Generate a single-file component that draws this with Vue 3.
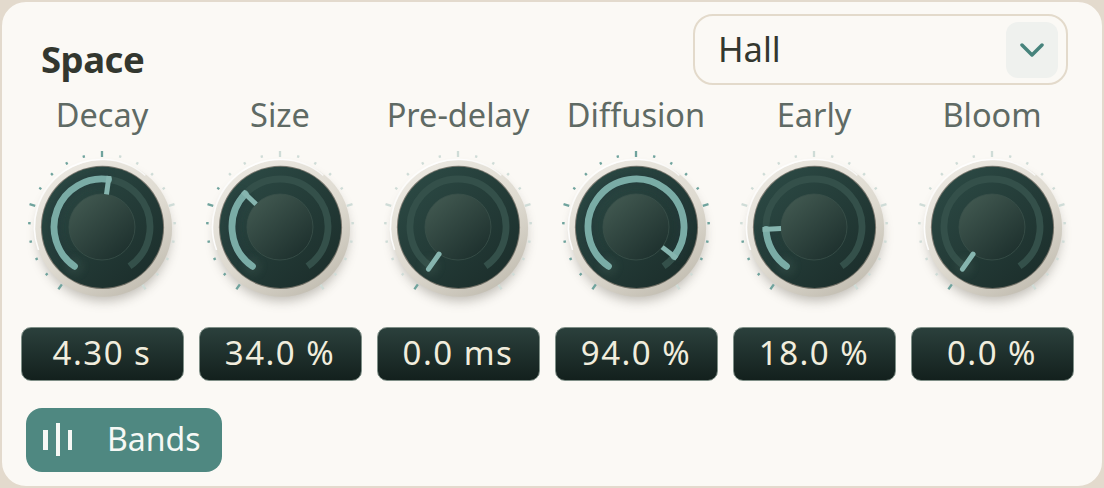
<script setup>
const CX = 89
const CY = 89
const START = -145
const SWEEP = 290

const knobs = [
  { id: 'decay', label: 'Decay', value: 0.527, text: '4.30 s' },
  { id: 'size', label: 'Size', value: 0.34, text: '34.0 %' },
  { id: 'predelay', label: 'Pre-delay', value: 0, text: '0.0 ms' },
  { id: 'diffusion', label: 'Diffusion', value: 0.94, text: '94.0 %' },
  { id: 'early', label: 'Early', value: 0.18, text: '18.0 %' },
  { id: 'bloom', label: 'Bloom', value: 0, text: '0.0 %' },
]

function polar(r, deg) {
  const a = (deg * Math.PI) / 180
  return [CX + r * Math.sin(a), CY - r * Math.cos(a)]
}

function arc(r, from, to) {
  const [x1, y1] = polar(r, from)
  const [x2, y2] = polar(r, to)
  const large = to - from > 180 ? 1 : 0
  return `M${x1.toFixed(2)} ${y1.toFixed(2)}A${r} ${r} 0 ${large} 1 ${x2.toFixed(2)} ${y2.toFixed(2)}`
}

function line(r1, r2, deg) {
  const [x1, y1] = polar(r1, deg)
  const [x2, y2] = polar(r2, deg)
  return { x1, y1, x2, y2 }
}

function angle(k) {
  return START + SWEEP * k.value
}

function ticks(k) {
  const out = []
  for (let i = 0; i <= 20; i++) {
    const deg = START + i * 14.5
    const major = i % 5 === 0
    const on = deg <= angle(k) + 0.01
    out.push({
      ...line(major ? 70 : 71.5, major ? 76 : 74, deg),
      major,
      on,
    })
  }
  return out
}
</script>

<template>
  <div class="panel">
    <header class="head">
      <h2 class="title">Space</h2>
      <div class="select">
        <span class="select-value">Hall</span>
        <span class="select-btn">
          <svg width="24" height="14" viewBox="0 0 24 14">
            <path d="M2 2 L12 12 L22 2" fill="none" stroke="#47837c" stroke-width="3.5" stroke-linecap="round" stroke-linejoin="round" />
          </svg>
        </span>
      </div>
    </header>

    <div class="knobs">
      <div v-for="k in knobs" :key="k.id" class="knob">
        <div class="knob-label">{{ k.label }}</div>
        <svg class="dial" width="178" height="178" viewBox="0 0 178 178">
          <defs>
            <linearGradient :id="k.id + '-rim'" x1="0.2" y1="0" x2="0.8" y2="1">
              <stop offset="0" stop-color="#ece9e2" />
              <stop offset="0.55" stop-color="#dedad0" />
              <stop offset="1" stop-color="#c0bbaf" />
            </linearGradient>
            <linearGradient :id="k.id + '-face'" x1="0.15" y1="0.1" x2="0.8" y2="0.9">
              <stop offset="0" stop-color="#2b4843" />
              <stop offset="1" stop-color="#1d302d" />
            </linearGradient>
            <linearGradient :id="k.id + '-cap'" x1="0.15" y1="0.1" x2="0.8" y2="0.9">
              <stop offset="0" stop-color="#40574f" />
              <stop offset="1" stop-color="#1f322f" />
            </linearGradient>
            <linearGradient :id="k.id + '-hi'" x1="0" y1="0" x2="1" y2="0.5">
              <stop offset="0" stop-color="#fff" stop-opacity="0" />
              <stop offset="0.3" stop-color="#fff" stop-opacity="0.9" />
              <stop offset="1" stop-color="#fff" stop-opacity="0.7" />
            </linearGradient>
            <filter :id="k.id + '-shadow'" x="-30%" y="-30%" width="160%" height="160%">
              <feGaussianBlur stdDeviation="6" />
            </filter>
            <filter :id="k.id + '-glow'" x="-50%" y="-50%" width="200%" height="200%">
              <feGaussianBlur stdDeviation="3" />
            </filter>
          </defs>

          <circle :cx="CX + 2" :cy="CY + 8" r="66" fill="#5f5a50" opacity="0.38" :filter="`url(#${k.id}-shadow)`" />

          <line
            v-for="(t, i) in ticks(k)"
            :key="i"
            :x1="t.x1"
            :y1="t.y1"
            :x2="t.x2"
            :y2="t.y2"
            :stroke="t.on ? '#6fa39d' : '#cfdcd7'"
            stroke-width="2.3"
          />

          <circle :cx="CX + 1.6" :cy="CY + 1.2" r="68.5" :fill="`url(#${k.id}-rim)`" />
          <path :d="arc(67.5, -110, 40)" fill="none" :stroke="`url(#${k.id}-hi)`" stroke-width="1.6" />
          <circle :cx="CX + 0.5" :cy="CY + 0.3" r="61.6" fill="#4a4a42" opacity="0.7" />
          <circle :cx="CX + 0.5" :cy="CY + 0.3" r="60.6" :fill="`url(#${k.id}-face)`" />

          <path :d="arc(48, START, 145)" fill="none" stroke="#34504a" stroke-width="6.8" />
          <path
            v-if="k.value > 0"
            :d="arc(48, START, angle(k))"
            fill="none"
            stroke="#22393a"
            stroke-width="13"
            opacity="0.45"
            :filter="`url(#${k.id}-glow)`"
          />
          <circle
            :cx="polar(48, START)[0]"
            :cy="polar(48, START)[1]"
            r="9"
            fill="#3a544e"
            opacity="0.35"
            :filter="`url(#${k.id}-glow)`"
          />
          <circle :cx="CX" :cy="CY" r="33" :fill="`url(#${k.id}-cap)`" stroke="#3a504a" stroke-width="0.8" />
          <path
            v-if="k.value > 0"
            :d="arc(48, START, angle(k))"
            fill="none"
            stroke="#7aaca6"
            stroke-width="6.8"
            stroke-linecap="round"
          />
          <line
            v-bind="line(33, 51.5, angle(k))"
            stroke="#86b5af"
            stroke-width="5"
            :stroke-linecap="k.value > 0 ? 'butt' : 'round'"
          />
        </svg>
        <div class="readout">{{ k.text }}</div>
      </div>
    </div>

    <button class="bands" type="button">
      <svg width="30" height="34" viewBox="0 0 30 34">
        <rect x="0" y="7" width="5" height="20" fill="#f6f8f5" />
        <rect x="13" y="0" width="4" height="33" fill="#f6f8f5" />
        <rect x="25" y="7" width="4" height="20" fill="#f6f8f5" />
      </svg>
      <span class="bands-text">Bands</span>
    </button>
  </div>
</template>

<style scoped>
.panel {
  box-sizing: border-box;
  width: 1104px;
  height: 488px;
  padding: 12px 11px 0;
  background: #fbf9f5;
  border: 2px solid #e3dacd;
  border-radius: 26px;
  font-family: "Noto Sans", sans-serif;
  color: #33372f;
}

.head {
  display: flex;
  justify-content: space-between;
  align-items: flex-end;
  padding-right: 23px;
}

.title {
  margin: 0 0 5px 28px;
  font-size: 36.5px;
  line-height: 42px;
  font-weight: 700;
  letter-spacing: -0.5px;
  color: #33372f;
}

.select {
  box-sizing: border-box;
  display: flex;
  align-items: center;
  justify-content: space-between;
  width: 375px;
  height: 71px;
  padding: 0 8px 0 23px;
  border: 2px solid #e3dacb;
  border-radius: 20px;
}

.select-value {
  margin-bottom: 2px;
  font-size: 34.5px;
  color: #33372f;
}

.select-btn {
  display: flex;
  align-items: center;
  justify-content: center;
  width: 52px;
  height: 56px;
  border-radius: 12px;
  background: #eff1ee;
}

.knobs {
  display: grid;
  grid-template-columns: repeat(6, 178px);
  margin-top: 13px;
}

.knob {
  display: flex;
  flex-direction: column;
  align-items: center;
}

.knob-label {
  height: 36px;
  font-size: 32.5px;
  line-height: 34px;
  color: #5f6a64;
  white-space: nowrap;
}

.dial {
  display: block;
  margin-top: 4px;
}

.readout {
  box-sizing: border-box;
  width: 163px;
  height: 54px;
  margin-top: 11px;
  border: 1px solid #7f8f87;
  border-radius: 10px;
  background: linear-gradient(#2b403c, #13201d);
  color: #f1eddd;
  font-size: 33px;
  line-height: 50px;
  letter-spacing: 1.5px;
  text-align: center;
  white-space: nowrap;
}

.bands {
  display: flex;
  align-items: center;
  gap: 34px;
  box-sizing: border-box;
  width: 196px;
  height: 64px;
  margin: 27px 0 0 13px;
  padding: 0 0 0 17px;
  border: 0;
  border-radius: 16px;
  background: #4f8881;
  color: #f6f8f5;
  font-family: inherit;
  font-size: 32px;
}

.bands-text {
  margin-bottom: 3px;
}
</style>

<style>
html,
body {
  background: #e3dacd;
}
</style>
